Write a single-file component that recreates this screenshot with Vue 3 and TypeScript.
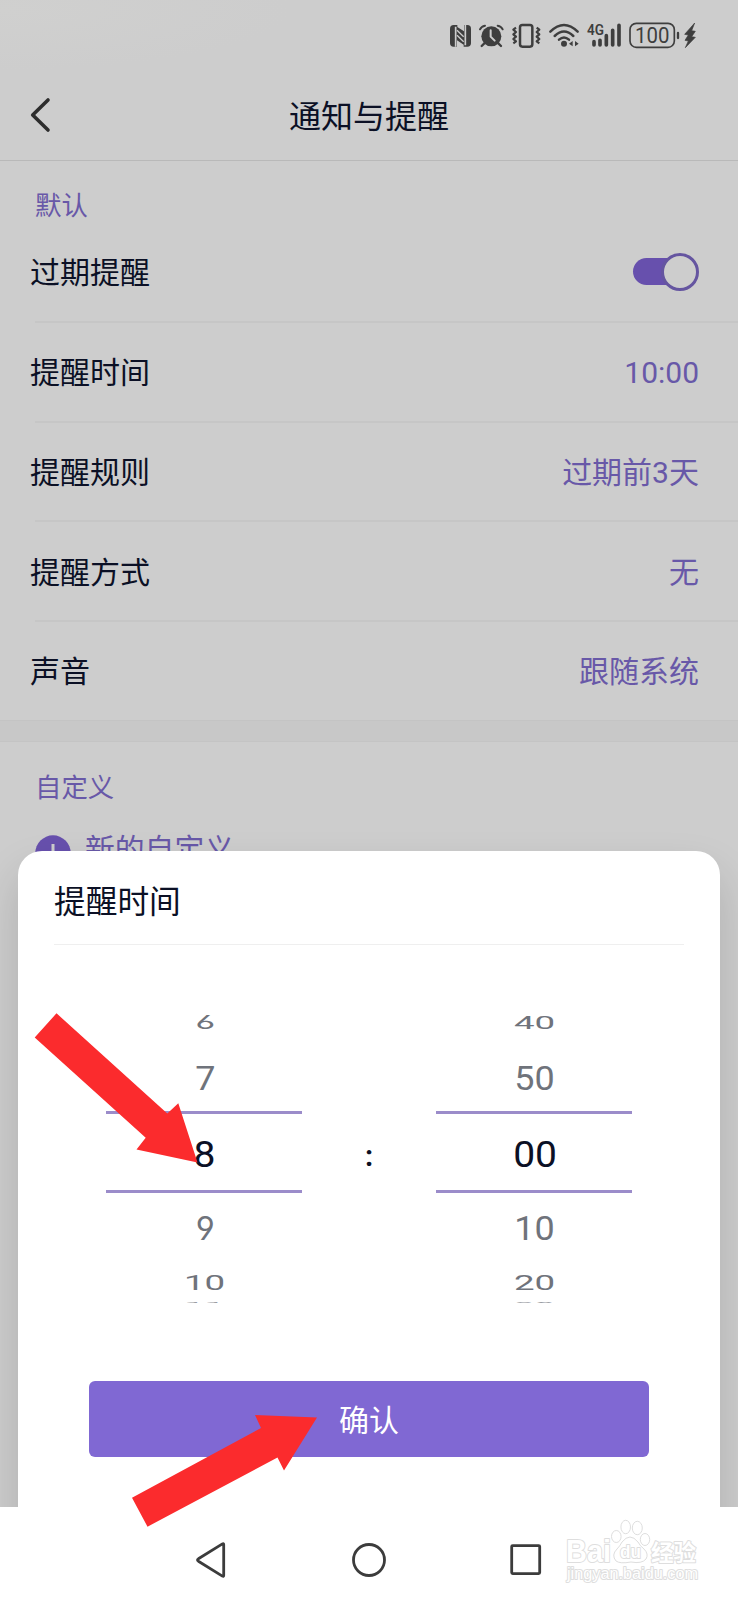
<script setup lang="ts">
interface SettingRow {
  label: string
  value?: string
  toggle?: boolean
  numeric?: boolean
}
interface Wheel {
  id: string
  items: string[]
}

const rows: SettingRow[] = [
  { label: '过期提醒', toggle: true },
  { label: '提醒时间', value: '10:00', numeric: true },
  { label: '提醒规则', value: '过期前3天' },
  { label: '提醒方式', value: '无' },
  { label: '声音', value: '跟随系统' },
]

const wheels: Wheel[] = [
  { id: 'hour', items: ['6', '7', '8', '9', '10', '11'] },
  { id: 'minute', items: ['40', '50', '00', '10', '20', '30'] },
]
const slots = ['far-top', 'near-top', 'selected', 'near-bottom', 'far-bottom', 'edge']
</script>

<template>
  <div class="phone">
    <div class="status">
      <svg class="status-icons" viewBox="0 0 924 210" fill="none" stroke="#3e3e3e">
        <!-- NFC -->
        <rect x="60" y="75" width="63" height="65" rx="11" fill="#3e3e3e" stroke="none" />
        <path d="M77 140V80M106 75V136" stroke="#cdcdcd" stroke-width="5" />
        <path d="M82 81V74H102V94ZM81 121V141H101V134Z" fill="#cdcdcd" stroke="none" />
        <path d="M81 91L101 110M81 106L101 125" stroke="#cdcdcd" stroke-width="4" />
        <!-- alarm -->
        <circle cx="184" cy="109" r="30" fill="#3e3e3e" stroke="none" />
        <path d="M150 88Q154 79 165 77M203 77Q214 79 218 88" stroke-width="6" stroke-linecap="round" />
        <path d="M163 130L155 138M205 130L213 138" stroke-width="7" stroke-linecap="round" />
        <path d="M182 91V110L194 122" stroke="#cdcdcd" stroke-width="6" stroke-linecap="round" />
        <!-- vibrate -->
        <rect x="270" y="75" width="37" height="65" rx="7" stroke-width="7.5" />
        <path d="M258 83L250 89L258 96L250 103L258 110L250 117L258 124L250 130M320 83L328 89L320 96L328 103L320 110L328 117L320 124L328 130" stroke-width="6.5" stroke-linejoin="round" />
        <!-- wifi -->
        <g stroke-width="7.5" stroke-linecap="round">
          <path d="M361 95Q402 55 443 95" />
          <path d="M374 108Q402 81 430 108" />
          <path d="M387 119Q402 106 417 119" />
        </g>
        <circle cx="402" cy="131" r="9" fill="#3e3e3e" stroke="none" />
        <path d="M428 123V139L417 131ZM435 123V139L446 131Z" fill="#3e3e3e" stroke="none" />
        <!-- signal -->
        <text x="471" y="105" class="net" textLength="51" lengthAdjust="spacingAndGlyphs">4G</text>
        <path d="M492 125V135M510 121V135M529 107V135M548 91V135M567 76V135" stroke-width="11" stroke-linecap="round" />
        <!-- battery -->
        <rect x="600" y="70" width="133" height="72" rx="19" stroke-width="5" />
        <text x="615" y="129" class="level" textLength="103" lengthAdjust="spacingAndGlyphs">100</text>
        <path d="M744 99V114" stroke-width="7" stroke-linecap="round" />
        <path d="M794 69L764 103L775 105L765 121L775 123L766 143L796 112L785 110L796 94L785 92Z" fill="#3e3e3e" stroke="#3e3e3e" stroke-width="2" />
      </svg>
    </div>

    <header class="nav">
      <svg class="back" viewBox="0 0 24 36"><path d="M20 3L4.700 18L20 33" /></svg>
      <h1>通知与提醒</h1>
    </header>

    <section class="group">
      <h2>默认</h2>
      <div v-for="row in rows" :key="row.label" class="row">
        <span class="label">{{ row.label }}</span>
        <span v-if="row.toggle" class="toggle"><i class="knob"></i></span>
        <span v-else class="value" :class="{ numeric: row.numeric }">{{ row.value }}</span>
      </div>
    </section>
    <div class="band"></div>
    <section class="custom">
      <h2>自定义</h2>
      <div class="add">
        <svg class="plus" viewBox="0 0 36 36">
          <circle cx="18" cy="18" r="17.7" />
          <path d="M18 9V27M9 18H27" />
        </svg>
        <span>新的自定义</span>
      </div>
    </section>

    <div class="sheet-layer">
      <div class="sheet">
        <h3>提醒时间</h3>
        <div class="picker">
          <div v-for="wheel in wheels" :key="wheel.id" class="wheel">
            <div v-for="(item, i) in wheel.items" :key="i" class="slot" :class="slots[i]">
              <span :class="{ open: item === '6' || item === '9' }">{{ item }}</span>
            </div>
          </div>
          <span class="colon">:</span>
        </div>
        <button class="confirm" type="button"><span>确认</span></button>
      </div>
    </div>

    <footer class="system-nav">
      <svg viewBox="0 0 738 93" fill="none" stroke="#3c3c3c" stroke-width="2.8" stroke-linejoin="round">
        <path d="M223.700 37.600V68.400Q223.700 69.800 222.400 69.100L198.400 54.200Q196.600 53 198.400 51.800L222.400 36.900Q223.700 36.200 223.700 37.600Z" />
        <circle cx="369" cy="53" r="15.5" />
        <rect x="511.700" y="38.600" width="28" height="28" rx="1" />
        <g class="mark">
          <text x="566" y="55" class="mark-big" textLength="45" lengthAdjust="spacingAndGlyphs">Bai</text>
          <ellipse cx="616.300" cy="29.500" rx="4.800" ry="6" />
          <ellipse cx="625.700" cy="20" rx="4.800" ry="6.700" />
          <ellipse cx="637.300" cy="21" rx="5" ry="6.700" />
          <ellipse cx="645" cy="32.500" rx="4.700" ry="6" />
          <path d="M622 35Q630 25 638 35Q640 39 644 42Q649 47 646 52Q642 57 631 55Q620 57 616 54Q611 48 617 42Q620 39 622 35Z" />
          <text x="620" y="51" class="mark-du" textLength="21" lengthAdjust="spacingAndGlyphs">du</text>
          <text x="651" y="54" class="mark-cn" textLength="45" lengthAdjust="spacingAndGlyphs">经验</text>
          <text x="567" y="72" class="mark-url" textLength="131" lengthAdjust="spacingAndGlyphs">jingyan.baidu.com</text>
        </g>
      </svg>
    </footer>

    <svg class="arrows" viewBox="0 0 738 1600">
      <path d="M56.500 1013.300L167.300 1113.500L178.300 1103.300L197.500 1162.500L136.500 1149.500L145.700 1137.800L34.700 1037.500Z" />
      <path d="M132 1497.700L261 1428L255 1415L317 1417.500L284 1470.500L277.500 1457.500L147.500 1526.700Z" />
    </svg>
  </div>
</template>

<style>
body {
  margin: 0;
}
</style>

<style scoped>
.phone {
  position: relative;
  width: 738px;
  height: 1600px;
  overflow: hidden;
  background: #cdcdcd;
  color: #0b1025;
  font-family: Roboto, 'Noto Sans CJK SC', sans-serif;
}
h1, h2, h3 {
  margin: 0;
  font-weight: 400;
}
.status {
  display: flex;
  height: 70px;
  justify-content: flex-end;
  background: radial-gradient(ellipse 290px 60px at 0 10px, #d0d0cf, #cdcdcd);
}
.status-icons {
  width: 308px;
  height: 70px;
}
.status-icons text {
  fill: #3e3e3e;
  stroke: none;
}
.net {
  font: 600 44px Roboto, sans-serif;
}
.level {
  font: 400 66px Roboto, sans-serif;
}
.nav {
  display: grid;
  grid-template-columns: 80px 1fr 80px;
  align-items: center;
  height: 90px;
  border-bottom: 1px solid #b9b9b9;
}
.back {
  width: 24px;
  height: 36px;
  margin-left: 28px;
  fill: none;
  stroke: #2d2d2d;
  stroke-width: 3.6;
  stroke-linecap: round;
  stroke-linejoin: round;
}
h1 {
  padding-top: 4px;
  text-align: center;
  font-size: 32px;
  line-height: 48px;
}
h2 {
  padding-left: 35px;
  font-size: 26.4px;
  line-height: 40px;
  color: #6858a8;
}
.group h2 {
  height: 39px;
  padding-top: 25px;
}
.row {
  display: flex;
  align-items: center;
  justify-content: space-between;
  height: 97.7px;
  margin-left: 35px;
  padding-right: 39px;
  border-bottom: 2px solid #c6c6c6;
  font-size: 30px;
}
.row:nth-child(2) {
  height: 96px;
}
.row:last-child {
  border-bottom: 0;
}
.label {
  margin-left: -5px;
  padding-bottom: 3px;
}
.row:nth-child(2) .label {
  padding-bottom: 6px;
}
.value {
  padding-bottom: 3px;
  color: #6858a8;
}
.value.numeric {
  padding: 2px 0 0;
}
.toggle {
  display: flex;
  align-items: center;
  justify-content: flex-end;
  width: 66px;
  height: 38px;
  margin-bottom: 3px;
}
.toggle::before {
  content: '';
  width: 42px;
  height: 27px;
  margin-right: -14px;
  border-radius: 14px 0 0 14px;
  background: #6750ad;
}
.knob {
  box-sizing: border-box;
  width: 38px;
  height: 38px;
  border: 3px solid #6555a0;
  border-radius: 50%;
  background: #cdcdcd;
}
.band {
  height: 20px;
  background: #c8c8c8;
  border-top: 1px solid #c4c4c4;
  border-bottom: 1px solid #c4c4c4;
}
.custom {
  padding-top: 26px;
}
.add {
  display: flex;
  align-items: center;
  gap: 14px;
  height: 44px;
  margin: 23px 0 0 35px;
  color: #6858a8;
  font-size: 29.8px;
}
.add span {
  padding-bottom: 12px;
}
.plus {
  width: 36px;
  height: 36px;
  fill: #6750ad;
  stroke-width: 3;
}
.plus path {
  stroke: #cdcdcd;
}
.sheet-layer {
  position: absolute;
  left: 0;
  top: 780px;
  width: 738px;
  height: 727px;
  overflow: hidden;
}
.sheet {
  box-sizing: border-box;
  width: 702px;
  height: 820px;
  margin: 71px 0 0 18px;
  padding: 0 36px;
  border-radius: 24px 24px 0 0;
  background: #fff;
  box-shadow: 0 22px 44px rgba(0, 0, 0, 0.15);
}
h3 {
  height: 93px;
  border-bottom: 1px solid #efefef;
  font-size: 31.7px;
  line-height: 103px;
}
.picker {
  position: relative;
  display: flex;
  justify-content: space-between;
  width: 526px;
  height: 303px;
  margin: 55px 0 0 52px;
  overflow: hidden;
}
.wheel {
  width: 196px;
}
.slot {
  display: flex;
  box-sizing: border-box;
  align-items: center;
  justify-content: center;
  padding-left: 2px;
  color: #6f737b;
  font-size: 33px;
  line-height: 40px;
}
.slot span {
  transform: scaleX(1.09);
}
.slot .open {
  font-family: Inter, Roboto, sans-serif;
  font-size: 32px;
  font-feature-settings: 'cv03', 'cv04';
  transform: scaleX(1.02);
}
.far-top {
  height: 44px;
  padding-top: 1px;
}
.far-top span {
  transform: scale(1.11, 0.58);
}
.far-top .open {
  transform: scale(1.06, 0.58);
}
.near-top {
  height: 67px;
  padding-top: 2px;
}
.slot.selected {
  height: 82px;
  padding-top: 3px;
  color: #0b1025;
  font-size: 37.5px;
  background:
    linear-gradient(#9b8cca, #9b8cca) top / 100% 3px no-repeat,
    linear-gradient(#9b8cca, #9b8cca) bottom / 100% 3px no-repeat;
}
.selected span {
  transform: scaleX(1.04);
}
.near-bottom {
  height: 70px;
  padding-top: 2px;
}
.far-bottom {
  height: 39px;
}
.far-bottom span {
  transform: scale(1.11, 0.62);
}
.edge {
  height: 1px;
  align-items: flex-start;
  opacity: 0.7;
}
.edge span {
  transform: translateY(-0.8px) scale(1.09, 0.2);
  transform-origin: top;
}
.colon {
  position: absolute;
  left: 253px;
  top: 138px;
  width: 20px;
  text-align: center;
  font-size: 29px;
  font-weight: 700;
  line-height: 36px;
}
.confirm {
  display: block;
  width: 560px;
  height: 76px;
  margin: 78px 0 0 35px;
  padding: 0 0 3px;
  border: 0;
  border-radius: 6px;
  background: #8068d3;
  color: #fff;
  font: inherit;
  font-size: 30px;
}
.system-nav {
  position: absolute;
  left: 0;
  bottom: 0;
  width: 738px;
  height: 93px;
  background: #fff;
}
.system-nav svg {
  display: block;
  width: 738px;
  height: 93px;
}
.mark {
  fill: #fff;
  stroke: #dedede;
  stroke-width: 1;
}
.mark text {
  paint-order: stroke;
  stroke-width: 2;
}
.mark-big {
  font: 700 31px 'Liberation Sans', sans-serif;
}
.mark-du {
  font: 700 19px 'Liberation Sans', sans-serif;
}
.mark-cn {
  font: 700 23px 'Noto Sans CJK SC', sans-serif;
}
.mark-url {
  font: 400 16px 'Liberation Sans', sans-serif;
}
.arrows {
  position: absolute;
  left: 0;
  top: 0;
  width: 738px;
  height: 1600px;
  fill: #fb2b2d;
}
</style>
